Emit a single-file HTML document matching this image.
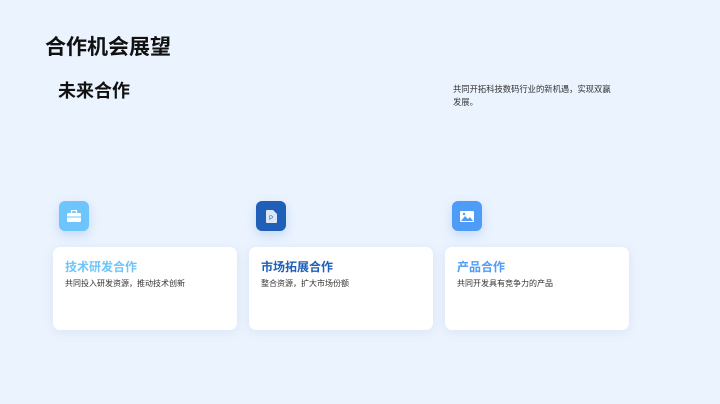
<!DOCTYPE html>
<html><head><meta charset="utf-8"><style>
*{margin:0;padding:0;box-sizing:border-box}
body{width:720px;height:404px;overflow:hidden;background:#ebf3fe;font-family:"Liberation Sans","Noto Sans CJK SC",sans-serif;position:relative;color:#111}
.a{position:absolute}
h1{position:absolute;left:45px;top:31px;font-size:21px;font-weight:700;color:#111}
h2{position:absolute;left:58px;top:77px;font-size:18px;font-weight:700;color:#111}
.desc{left:453px;top:83px;font-size:8.3px;line-height:13px;color:#333;white-space:nowrap}
.ic{width:30px;height:30px;border-radius:6px;top:201px;box-shadow:0 4px 10px rgba(80,140,230,.25);display:flex;align-items:center;justify-content:center}
.card{top:247px;width:184px;height:83px;background:#fff;border-radius:7px;box-shadow:0 2px 10px rgba(120,150,200,.15)}
.card b{position:absolute;left:12px;top:11px;font-size:12px}
.card span{position:absolute;left:12px;top:31px;font-size:8px;color:#333}
</style></head><body>
<h1>合作机会展望</h1>
<h2>未来合作</h2>
<div class="a desc">共同开拓科技数码行业的新机遇，实现双赢<br>发展。</div>

<div class="a ic" style="left:59px;background:#6ec5fb"><svg width="14" height="12"><rect x="0" y="3" width="14" height="9" rx="1.5" fill="#fff"/><rect x="4.5" y="0.5" width="5" height="3" fill="none" stroke="#fff" stroke-width="1.2"/><rect x="0" y="6.5" width="14" height="1" fill="#6ec5fb"/></svg></div>
<div class="a ic" style="left:256px;background:#1f5fb8"><svg width="11" height="13"><path d="M0 1a1 1 0 0 1 1-1h6l4 4v8a1 1 0 0 1-1 1H1a1 1 0 0 1-1-1z" fill="#dbe6f7"/><text x="3" y="10" font-size="6" fill="#1f5fb8" font-family="Liberation Sans">P</text></svg></div>
<div class="a ic" style="left:452px;background:#4f9cf6"><svg width="14" height="11"><rect width="14" height="11" rx="1" fill="#fff"/><path d="M1 10l4-5 3 3 2-2 3 4z" fill="#4f9cf6"/><circle cx="4" cy="3" r="1.2" fill="#4f9cf6"/></svg></div>

<div class="a card" style="left:53px"><b style="color:#6ec5fb">技术研发合作</b><span>共同投入研发资源，推动技术创新</span></div>
<div class="a card" style="left:249px"><b style="color:#1f5fb8">市场拓展合作</b><span>整合资源，扩大市场份额</span></div>
<div class="a card" style="left:445px"><b style="color:#4f9cf6">产品合作</b><span>共同开发具有竞争力的产品</span></div>
</body></html>
